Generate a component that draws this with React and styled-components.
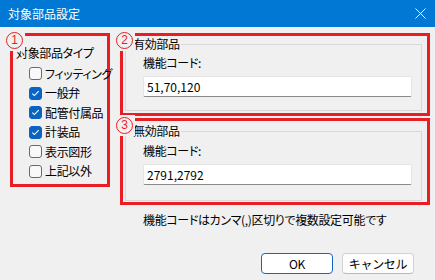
import React from "react";
import styled, { createGlobalStyle } from "styled-components";

const Global = createGlobalStyle`
  html, body { margin: 0; padding: 0; background: #f0f0f0; }
  body {
    font-family: "Noto Sans CJK JP", "Noto Sans", sans-serif;
    font-size: 12px;
    color: #000;
    font-feature-settings: "palt";
    letter-spacing: -0.35px;
  }
`;

const Window = styled.div`
  width: 435px;
  height: 280px;
  background: #f0f0f0;
  display: flex;
  flex-direction: column;
  overflow: hidden;
`;

const TitleBar = styled.div`
  height: 27px;
  flex: none;
  background: #0078d4;
  color: #fff;
  display: flex;
  align-items: center;
  justify-content: space-between;
  padding: 0 9px 0 8px;
  box-sizing: border-box;
`;

const Title = styled.span`
  font-size: 12px;
  line-height: 16px;
  letter-spacing: 0;
`;

const Content = styled.div`
  display: flex;
  gap: 10px;
  padding: 6px 5px 0 10px;
  align-items: flex-start;
`;

const Annot = styled.div`
  position: relative;
  border: 3px solid #ea1c24;
  box-sizing: border-box;
  width: ${(p) => p.$w}px;
  ${(p) => (p.$h ? `height: ${p.$h}px;` : "")}
`;

const Badge = styled.span`
  position: absolute;
  left: -9px;
  top: -6px;
  width: 21px;
  height: 21px;
  background: #f0f0f0;
  display: flex;
  align-items: center;
  justify-content: center;
`;

const BadgeCircle = styled.span`
  width: 15px;
  height: 15px;
  border: 1.2px solid #ea1c24;
  border-radius: 50%;
  color: #ea1c24;
  font-family: "Liberation Sans", sans-serif;
  font-size: 12px;
  letter-spacing: 0;
  line-height: 15px;
  text-align: center;
`;

const TypePanel = styled.div`
  padding: 9px 0 0 3px;
`;

const TypeLabel = styled.div`
  line-height: 16px;
  white-space: nowrap;
`;

const CheckList = styled.div`
  margin-top: 3px;
  padding-left: 13px;
  display: flex;
  flex-direction: column;
`;

const CheckRow = styled.label`
  height: 19.5px;
  display: flex;
  align-items: center;
  gap: 3px;
  line-height: 16px;
  font-size: 12px;
  white-space: nowrap;
`;

const Box = styled.span`
  width: 13px;
  height: 13px;
  box-sizing: border-box;
  border-radius: 3px;
  flex: none;
  display: flex;
  align-items: center;
  justify-content: center;
  border: 1px solid ${(p) => (p.$on ? "#0a64c4" : "#6a6a6a")};
  background: ${(p) => (p.$on ? "#0a64c4" : "#f9f9f9")};
`;

const RightCol = styled.div`
  width: 310px;
  display: flex;
  flex-direction: column;
  gap: 2px;
`;

const Group = styled.fieldset`
  margin: ${(p) => p.$mt}px 5px ${(p) => p.$mb}px 2px;
  padding: 0;
  border: 1px solid #d9d9d9;
  min-width: 0;
`;

const Legend = styled.legend`
  margin-left: 6px;
  padding: 0 1px;
  line-height: 16px;
  font-size: 12px;
`;

const GroupBody = styled.div`
  padding: ${(p) => p.$gap}px 9px ${(p) => p.$pb}px 17px;
`;

const FieldLabel = styled.div`
  line-height: 16px;
`;

const Input = styled.input`
  display: block;
  width: 100%;
  height: 21px;
  margin-top: 5px;
  box-sizing: border-box;
  padding: 0 3px;
  border: 1px solid #e4e4e4;
  border-bottom-color: #8a8a8a;
  border-radius: 2px;
  background: #fff;
  font-family: inherit;
  font-size: 12px;
  letter-spacing: 0;
  color: #000;
  outline: none;
`;

const Note = styled.div`
  margin-top: 5px;
  padding-left: 23px;
  line-height: 16px;
  white-space: nowrap;
`;

const Footer = styled.div`
  display: flex;
  justify-content: flex-end;
  gap: 9px;
  padding-right: 21px;
  margin-top: 25px;
`;

const Button = styled.button`
  width: 72px;
  height: 21px;
  box-sizing: border-box;
  border-radius: 4px;
  font-family: inherit;
  font-size: 12px;
  letter-spacing: inherit;
  color: #000;
  padding: 0;
  background: ${(p) => (p.$primary ? "#fff" : "#fdfdfd")};
  border: 1px solid ${(p) => (p.$primary ? "#1466c0" : "#d3d3d3")};
  ${(p) => (p.$primary ? "" : "border-bottom-color: #b8b8b8;")}
`;

const Check = () => (
  <svg width="9" height="9" viewBox="0 0 9 9">
    <path d="M1.3 4.6 L3.4 6.6 L7.7 2.2" fill="none" stroke="#fff" strokeWidth="1.1" />
  </svg>
);

const Close = () => (
  <svg width="11" height="11" viewBox="0 0 11 11">
    <path d="M0.5 0.5 L10.5 10.5 M10.5 0.5 L0.5 10.5" stroke="#fff" strokeWidth="1" />
  </svg>
);

const items = [
  { label: "フィッティング", on: false },
  { label: "一般弁", on: true },
  { label: "配管付属品", on: true },
  { label: "計装品", on: true },
  { label: "表示図形", on: false },
  { label: "上記以外", on: false },
];

const CodeGroup = ({ title, value, mt, mb, gap, pb }) => (
  <Group $mt={mt} $mb={mb}>
    <Legend>{title}</Legend>
    <GroupBody $gap={gap} $pb={pb}>
      <FieldLabel>機能コード:</FieldLabel>
      <Input defaultValue={value} readOnly />
    </GroupBody>
  </Group>
);

export default function App() {
  return (
    <Window>
      <Global />
      <TitleBar>
        <Title>対象部品設定</Title>
        <Close />
      </TitleBar>
      <Content>
        <Annot $w={100} $h={154}>
          <Badge>
            <BadgeCircle>1</BadgeCircle>
          </Badge>
          <TypePanel>
            <TypeLabel>対象部品タイプ</TypeLabel>
            <CheckList>
              {items.map((it) => (
                <CheckRow key={it.label}>
                  <Box $on={it.on}>{it.on && <Check />}</Box>
                  {it.label}
                </CheckRow>
              ))}
            </CheckList>
          </TypePanel>
        </Annot>
        <RightCol>
          <Annot $w={310}>
            <Badge>
              <BadgeCircle>2</BadgeCircle>
            </Badge>
            <CodeGroup title="有効部品" value="51,70,120" mt={0} mb={2} gap={3} pb={13} />
          </Annot>
          <Annot $w={310}>
            <Badge>
              <BadgeCircle>3</BadgeCircle>
            </Badge>
            <CodeGroup title="無効部品" value="2791,2792" mt={2} mb={1} gap={4} pb={15} />
          </Annot>
          <Note>機能コードはカンマ(,)区切りで複数設定可能です</Note>
        </RightCol>
      </Content>
      <Footer>
        <Button $primary>OK</Button>
        <Button>キャンセル</Button>
      </Footer>
    </Window>
  );
}
